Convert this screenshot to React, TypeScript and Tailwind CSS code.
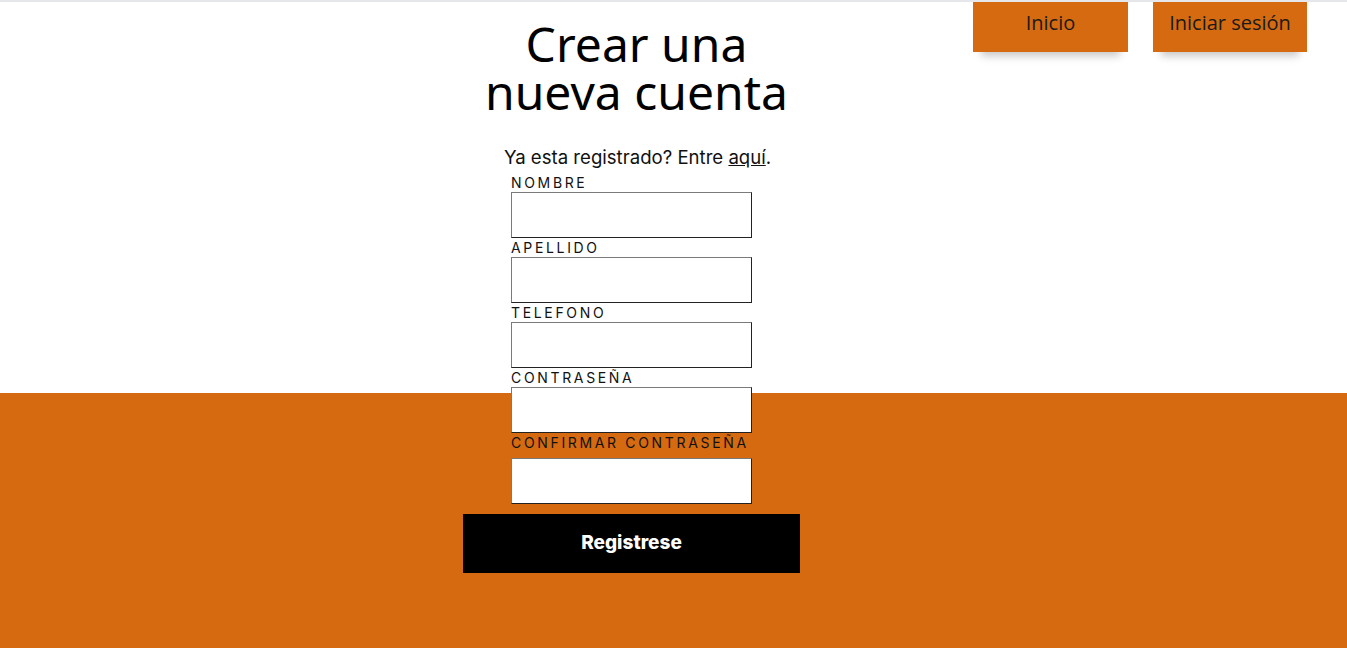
const fields = ['NOMBRE', 'APELLIDO', 'TELEFONO', 'CONTRASEÑA']

function Field({ label, last }: { label: string; last?: boolean }) {
  return (
    <div className="flex flex-col">
      <label
        className={`text-[14px] leading-[19px] tracking-[0.19em] text-[#111] ${last ? 'mb-[6px]' : ''}`}
        style={{ fontFamily: 'Inter, sans-serif' }}
      >
        {label}
      </label>
      <input
        type="text"
        className="w-[241px] h-[46px] bg-white border border-t-[#7a7a7a] border-l-[#7a7a7a] border-b-[#222] border-r-[#222]"
      />
    </div>
  )
}

export default function App() {
  return (
    <div className="h-[648px] border-t-2 border-[#e5e7eb] bg-[linear-gradient(to_bottom,#ffffff_391px,#d56a10_391px)] overflow-hidden">
      <div className="flex">
        <div className="w-[463px] shrink-0" />

        {/* formulario */}
        <div className="w-[337px] shrink-0 flex flex-col items-center">
          <h1
            className="mt-[18px] ml-[10px] text-center text-[48px] leading-[48px] text-black"
            style={{ fontFamily: '"Noto Sans", sans-serif' }}
          >
            Crear una
            <br />
            nueva cuenta
          </h1>
          <p
            className="mt-[30px] text-[18.6px] leading-[22px] text-[#111] ml-[12px]"
            style={{ fontFamily: 'Inter, sans-serif' }}
          >
            Ya esta registrado? Entre <span className="underline">aquí</span>.
          </p>
          <div className="mt-[5px] flex flex-col self-start ml-[48px]">
            {fields.map((f) => (
              <Field key={f} label={f} />
            ))}
            <Field label="CONFIRMAR CONTRASEÑA" last />
          </div>
          <button
            className="mt-[10px] w-[337px] h-[59px] bg-black text-white text-[19px] font-extrabold"
            style={{ fontFamily: 'Inter, sans-serif' }}
          >
            Registrese
          </button>
        </div>

        {/* navegacion */}
        <nav className="flex-1 flex justify-end gap-[25px] pr-[40px]">
          <a className="w-[155px] h-[50px] bg-[#d56a10] text-[#1a1a1a] text-[20px] leading-[28px] pt-[7px] text-center shadow-[0_12px_8px_-8px_rgba(0,0,0,0.22)]" style={{ fontFamily: '"Open Sans", sans-serif' }}>
            Inicio
          </a>
          <a className="w-[154px] h-[50px] bg-[#d56a10] text-[#1a1a1a] text-[20px] leading-[28px] pt-[7px] text-center shadow-[0_12px_8px_-8px_rgba(0,0,0,0.22)]" style={{ fontFamily: '"Open Sans", sans-serif' }}>
            Iniciar sesión
          </a>
        </nav>
      </div>
    </div>
  )
}
